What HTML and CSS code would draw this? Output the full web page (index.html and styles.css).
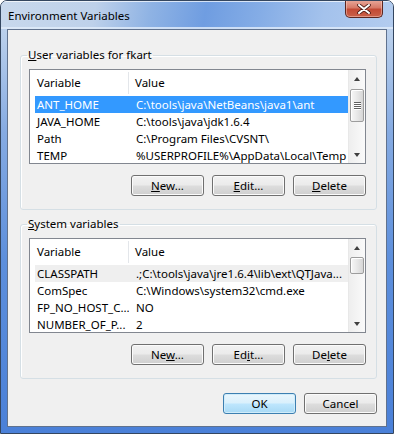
FILE: index.html
```html
<!DOCTYPE html>
<html lang="en">
<head>
  <meta charset="UTF-8">
  <title>Environment Variables</title>
  <link rel="stylesheet" href="styles.css">
</head>
<body>
  <div class="window">
    <div class="titlebar">
      <span class="title">Environment Variables</span>
      <div class="close-btn">
        <svg width="14" height="10" viewBox="0 0 14 10">
          <path d="M2 1 L12 9 M12 1 L2 9" stroke="#4a1a14" stroke-width="3.6" stroke-linecap="round"/>
          <path d="M2 1 L12 9 M12 1 L2 9" stroke="#ffffff" stroke-width="2" stroke-linecap="round"/>
        </svg>
      </div>
    </div>
    <div class="client">
      <fieldset class="group">
        <legend><u>U</u>ser variables for fkart</legend>
        <div class="listbox">
          <div class="list-main">
            <div class="list-head">
              <span class="col-name">Variable</span>
              <span class="col-value">Value</span>
            </div>
            <div class="row selected"><span class="col-name">ANT_HOME</span><span class="col-value">C:\tools\java\NetBeans\java1\ant</span></div>
            <div class="row"><span class="col-name">JAVA_HOME</span><span class="col-value">C:\tools\java\jdk1.6.4</span></div>
            <div class="row"><span class="col-name">Path</span><span class="col-value">C:\Program Files\CVSNT\</span></div>
            <div class="row"><span class="col-name">TEMP</span><span class="col-value">%USERPROFILE%\AppData\Local\Temp</span></div>
          </div>
          <div class="scrollbar">
            <div class="arrow up"></div>
            <div class="track"><div class="thumb thumb-user"><i></i><i></i><i></i><i></i></div></div>
            <div class="arrow down"></div>
          </div>
        </div>
        <div class="btn-row">
          <button class="btn"><u>N</u>ew...</button>
          <button class="btn"><u>E</u>dit...</button>
          <button class="btn"><u>D</u>elete</button>
        </div>
      </fieldset>

      <fieldset class="group group-system">
        <legend><u>S</u>ystem variables</legend>
        <div class="listbox">
          <div class="list-main">
            <div class="list-head">
              <span class="col-name">Variable</span>
              <span class="col-value">Value</span>
            </div>
            <div class="row inactive"><span class="col-name">CLASSPATH</span><span class="col-value">.;C:\tools\java\jre1.6.4\lib\ext\QTJava...</span></div>
            <div class="row"><span class="col-name">ComSpec</span><span class="col-value">C:\Windows\system32\cmd.exe</span></div>
            <div class="row"><span class="col-name">FP_NO_HOST_C...</span><span class="col-value">NO</span></div>
            <div class="row"><span class="col-name">NUMBER_OF_P...</span><span class="col-value">2</span></div>
          </div>
          <div class="scrollbar">
            <div class="arrow up"></div>
            <div class="track"><div class="thumb thumb-system"></div></div>
            <div class="arrow down"></div>
          </div>
        </div>
        <div class="btn-row">
          <button class="btn">Ne<u>w</u>...</button>
          <button class="btn">Ed<u>i</u>t...</button>
          <button class="btn">De<u>l</u>ete</button>
        </div>
      </fieldset>

      <div class="dialog-buttons">
        <button class="btn default">OK</button>
        <button class="btn">Cancel</button>
      </div>
    </div>
  </div>
</body>
</html>
```

FILE: styles.css
```css
body {
  margin: 0;
  font-family: "Segoe UI", "Noto Sans", "DejaVu Sans", sans-serif;
  font-size: 11.5px;
  color: #000;
  background: #fff;
}
.window {
  width: 394px;
  height: 434px;
  box-sizing: border-box;
  border: 1px solid #34465f;
  border-radius: 7px 7px 0 0;
  padding: 0 6px 6px;
  display: flex;
  flex-direction: column;
  background: linear-gradient(to bottom, #c6d8ee 0px, #b6cdeb 40px, #86abe2 130px, #5d8fdc 260px, #4a80d8 434px);
  overflow: hidden;
}
.titlebar {
  height: 28px;
  display: flex;
  align-items: center;
  margin: 0 -6px;
  padding: 0 6px;
  background: linear-gradient(100deg, #c8d8ec 0%, #bed1ea 24%, #8fb3e4 38%, #6f9de1 52%, #85ade6 66%, #a4c2ec 82%, #b3ccef 100%);
  box-shadow: inset 0 1px 0 rgba(255,255,255,0.7), inset 0 -2px 0 rgba(225,236,250,0.8);
}
.title {
  padding-left: 1px;
  padding-top: 1px;
}
.close-btn {
  margin-left: auto;
  margin-right: 4px;
  align-self: flex-start;
  margin-top: -1px;
  width: 38px;
  height: 18px;
  box-sizing: border-box;
  border: 1px solid #5c2620;
  border-top: none;
  border-radius: 0 0 5px 5px;
  background: linear-gradient(to bottom, #e9aa9c 0%, #d77a68 45%, #c34a35 55%, #c9614a 100%);
  box-shadow: inset 0 0 0 1px rgba(255,220,210,0.45);
  display: flex;
  justify-content: center;
  align-items: center;
}
.client {
  flex: 1;
  background: #f0f0f0;
  border: 1px solid #60728e;
  padding: 17px 9px 0 12px;
  display: flex;
  flex-direction: column;
}
.group {
  margin: 0;
  min-width: 0;
  border: 1px solid #d5dfe5;
  border-radius: 3px;
  padding: 6px 10px 13px 8px;
  box-shadow: inset 1px 1px 0 #fff;
}
.group legend {
  padding: 0 1px;
  margin-left: -2px;
  line-height: 16px;
}
.group-system {
  margin-top: 6px;
}
.listbox {
  height: 95px;
  box-sizing: border-box;
  border: 1px solid #828790;
  background: #fff;
  display: flex;
  overflow: hidden;
}
.list-main {
  flex: 1;
  overflow: hidden;
  white-space: nowrap;
}
.list-head {
  height: 26px;
  line-height: 26px;
  display: flex;
}
.list-head .col-name {
  flex-shrink: 0;
  width: 99px;
  padding-left: 7px;
  box-sizing: border-box;
  border-right: 1px solid #e3e6ea;
  height: 22px;
  margin-top: 2px;
  line-height: 22px;
}
.list-head .col-value {
  padding-left: 6px;
  line-height: 26px;
}
.row {
  height: 17px;
  line-height: 17px;
  margin-left: 5px;
  display: flex;
}
.row .col-name {
  flex-shrink: 0;
  width: 94px;
  padding-left: 2px;
  box-sizing: border-box;
  overflow: hidden;
}
.row .col-value {
  padding-left: 7px;
}
.row.selected {
  background: #3399ff;
  color: #fff;
}
.row.inactive {
  background: #efefef;
}
.scrollbar {
  width: 17px;
  flex-shrink: 0;
  display: flex;
  flex-direction: column;
  background: linear-gradient(to right, #eeeeee, #fafafa);
  border-left: 1px solid #e8e8e8;
  box-sizing: border-box;
}
.arrow {
  height: 17px;
  display: flex;
  justify-content: center;
  align-items: center;
}
.arrow::before {
  content: "";
  border-left: 3.5px solid transparent;
  border-right: 3.5px solid transparent;
}
.arrow.up::before {
  border-bottom: 4px solid #404040;
}
.arrow.down::before {
  border-top: 4px solid #404040;
}
.track {
  flex: 1;
  padding: 0 1px;
}
.thumb {
  box-sizing: border-box;
  border: 1px solid #9d9d9d;
  border-radius: 2px;
  background: linear-gradient(to right, #f7f7f7, #e8e8e8 50%, #d6d6d6);
  box-shadow: inset 1px 1px 0 #fff;
  display: flex;
  flex-direction: column;
  align-items: center;
  justify-content: center;
  gap: 1px;
}
.thumb i {
  width: 7px;
  height: 1px;
  background: #606060;
  box-shadow: 0 1px 0 #fff;
}
.thumb-user {
  margin-top: 2px;
  height: 33px;
}
.thumb-system {
  margin-top: 1px;
  height: 17px;
}
.btn-row {
  display: flex;
  justify-content: flex-end;
  gap: 8px;
  margin-top: 11px;
}
.btn {
  width: 73px;
  height: 21px;
  padding: 0;
  font: inherit;
  color: #000;
  border: 1px solid #707070;
  border-radius: 3px;
  background: linear-gradient(to bottom, #f2f2f2 0%, #ebebeb 48%, #dddddd 52%, #cfcfcf 100%);
  box-shadow: inset 0 0 0 1px #fbfbfb;
}
.btn.default {
  border-color: #3c7fb1;
  background: linear-gradient(to bottom, #eaf6fd 0%, #d9f0fc 48%, #bee6fd 52%, #a7d9f5 100%);
  box-shadow: inset 0 0 0 1px #d0ecfa;
}
.dialog-buttons {
  display: flex;
  justify-content: flex-end;
  gap: 8px;
  margin-top: 14px;
}
```
